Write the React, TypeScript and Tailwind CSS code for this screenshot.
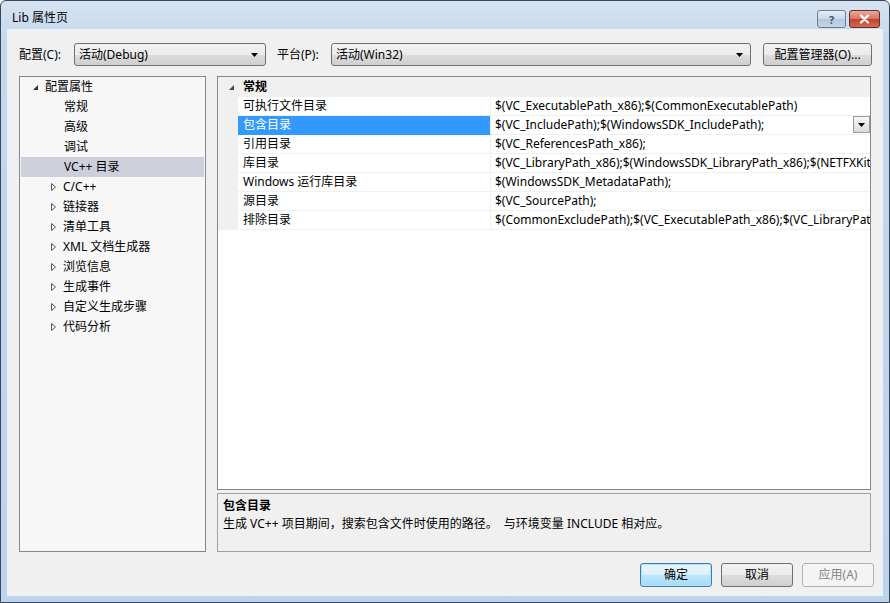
import React from "react";

const font = "font-[family-name:'Noto_Sans','Noto_Sans_CJK_SC',sans-serif]";

const treeChildren = ["常规", "高级", "调试", "VC++ 目录"];
const treeGroups = ["C/C++", "链接器", "清单工具", "XML 文档生成器", "浏览信息", "生成事件", "自定义生成步骤", "代码分析"];

const rows = [
  { name: "可执行文件目录", value: "$(VC_ExecutablePath_x86);$(CommonExecutablePath)" },
  { name: "包含目录", value: "$(VC_IncludePath);$(WindowsSDK_IncludePath);", selected: true },
  { name: "引用目录", value: "$(VC_ReferencesPath_x86);" },
  { name: "库目录", value: "$(VC_LibraryPath_x86);$(WindowsSDK_LibraryPath_x86);$(NETFXKitsDir)Lib\\um\\x86" },
  { name: "Windows 运行库目录", value: "$(WindowsSDK_MetadataPath);" },
  { name: "源目录", value: "$(VC_SourcePath);" },
  { name: "排除目录", value: "$(CommonExcludePath);$(VC_ExecutablePath_x86);$(VC_LibraryPath_x86);" },
];

function ExpandedArrow() {
  return (
    <svg width="7" height="7" viewBox="0 0 7 7" className="shrink-0">
      <path d="M6 1 L6 6 L1 6 Z" fill="#333" />
    </svg>
  );
}

function CollapsedArrow() {
  return (
    <svg width="7" height="10" viewBox="0 0 7 10" className="shrink-0">
      <path d="M1.5 1.5 L5.5 5 L1.5 8.5 Z" fill="none" stroke="#555" strokeWidth="1" />
    </svg>
  );
}

function DropArrow() {
  return (
    <svg width="7" height="4" viewBox="0 0 7 4">
      <path d="M0 0 H7 L3.5 4 Z" fill="#000" />
    </svg>
  );
}

function Combo({ value, width }: { value: string; width: string }) {
  return (
    <div
      className={`${width} shrink-0 h-[23px] flex items-center justify-between rounded-[3px] border border-[#707070] bg-[linear-gradient(#f2f2f2,#ebebeb_50%,#dddddd_50%,#cfcfcf)] pl-[4px] pr-[7px]`}
    >
      <span>{value}</span>
      <DropArrow />
    </div>
  );
}

function Button({ label, primary, disabled }: { label: string; primary?: boolean; disabled?: boolean }) {
  return (
    <div
      className={`w-[72px] h-[24px] flex items-center justify-center rounded-[3px] border ${
        primary
          ? "border-[#3c7fb1] bg-[linear-gradient(#eaf6fd,#d9f0fc_50%,#bee6fd_50%,#a7d9f5)] shadow-[inset_0_0_0_1px_#aee0f7]"
          : disabled
          ? "border-[#adb2b5] bg-[#f4f4f4] text-[#838383]"
          : "border-[#707070] bg-[linear-gradient(#f2f2f2,#ebebeb_50%,#dddddd_50%,#cfcfcf)]"
      }`}
    >
      {label}
    </div>
  );
}

export default function App() {
  return (
    <div className={`w-[890px] h-[603px] ${font} text-[12px] leading-none text-black`}>
      <div className="w-full h-full flex flex-col rounded-t-[6px] border border-[#38475a] bg-[linear-gradient(#d6e3f2,#c4d8ee_40px,#bcd3ec)]">
        {/* title bar */}
        <div className="h-[29px] shrink-0 flex items-start justify-between pl-[11px] pr-[9px]">
          <span className="mt-[11px] text-[12px]">Lib 属性页</span>
          <div className="flex gap-[3px] mt-[9px]">
            <div className="w-[29px] h-[18px] rounded-[3px] border border-[#6d7d91] bg-[linear-gradient(#e6eef8,#c9d7e8_50%,#b4c6dc_50%,#c4d5e9)] flex items-center justify-center text-[11px] font-bold text-[#44546a]">
              ?
            </div>
            <div className="w-[31px] h-[18px] rounded-[3px] border border-[#6b2a22] bg-[linear-gradient(#e9a99c,#d47260_50%,#c2412a_50%,#d26a50)] flex items-center justify-center">
              <svg width="11" height="10" viewBox="0 0 11 10">
                <path d="M2 1.5 L9 8.5 M9 1.5 L2 8.5" stroke="#fff" strokeWidth="2.4" strokeLinecap="round" />
              </svg>
            </div>
          </div>
        </div>

        {/* client area */}
        <div className="flex-1 mx-[7px] mb-[7px] bg-[#f0f0f0] flex flex-col shadow-[0_0_0_1px_#eaf1f9]">
          {/* top row */}
          <div className="flex items-center h-[23px] mt-[13px] pl-[11px] pr-[11px]">
            <span className="w-[55px] shrink-0">配置(C):</span>
            <Combo value="活动(Debug)" width="w-[192px]" />
            <span className="ml-[11px] w-[54px] shrink-0">平台(P):</span>
            <Combo value="活动(Win32)" width="w-[420px]" />
            <div className="ml-[12px] w-[109px] shrink-0 h-[23px] flex items-center justify-center rounded-[3px] border border-[#707070] bg-[linear-gradient(#f2f2f2,#ebebeb_50%,#dddddd_50%,#cfcfcf)]">
              配置管理器(O)...
            </div>
          </div>

          {/* main area */}
          <div className="flex mt-[10px] pl-[11px] pr-[11px] h-[476px] gap-[11px]">
            {/* tree */}
            <div className="w-[187px] shrink-0 border border-[#828790] bg-[#f7f7f7] px-[1px]">
              <div className="h-[20px] flex items-center">
                <div className="w-[24px] flex justify-end pr-[6px]">
                  <ExpandedArrow />
                </div>
                <span>配置属性</span>
              </div>
              {treeChildren.map((c) => (
                <div
                  key={c}
                  className={`h-[20px] flex items-center pl-[43px] whitespace-nowrap ${c === "VC++ 目录" ? "bg-[#cdd0da]" : ""}`}
                >
                  {c}
                </div>
              ))}
              {treeGroups.map((g) => (
                <div key={g} className="h-[20px] flex items-center pl-[29px] gap-[6px] whitespace-nowrap">
                  <CollapsedArrow />
                  <span>{g}</span>
                </div>
              ))}
            </div>

            {/* right side */}
            <div className="flex-1 min-w-0 flex flex-col gap-[3px]">
              <div className="h-[415px] border border-[#828790] bg-white overflow-hidden">
                <div className="h-[20px] flex items-center bg-[#f0f0f0]">
                  <div className="w-[25px] flex justify-center pl-[1px]">
                    <svg width="5" height="5" viewBox="0 0 5 5">
                      <path d="M5 0 L5 5 L0 5 Z" fill="#444" />
                    </svg>
                  </div>
                  <span className="font-bold">常规</span>
                </div>
                {rows.map((r) => (
                  <div key={r.name} className="h-[19px] flex">
                    <div className="w-[20px] shrink-0 bg-[#f0f0f0]" />
                    <div
                      className={`w-[253px] shrink-0 flex items-center pl-[5px] border-r border-[#f0f0f0] border-b ${
                        r.selected ? "bg-[#3399ff] text-white border-b-[#3399ff]" : "border-b-[#f0f0f0]"
                      }`}
                    >
                      {r.name}
                    </div>
                    <div className="flex-1 min-w-0 flex items-center pl-[4px] border-b border-[#f0f0f0] relative overflow-hidden">
                      <span className="whitespace-nowrap">{r.value}</span>
                      {r.selected && (
                        <div className="absolute right-[0px] top-[0px] w-[17px] h-[17px] border border-[#9a9a9a] bg-[linear-gradient(#f6f6f6,#dcdcdc)] flex items-center justify-center">
                          <DropArrow />
                        </div>
                      )}
                    </div>
                  </div>
                ))}
              </div>
              <div className="h-[59px] border border-[#a0a0a0] bg-[#f0f0f0] pl-[5px] pt-[5px]">
                <div className="font-bold leading-[14px]">包含目录</div>
                <div className="mt-[4px] leading-[14px] whitespace-nowrap">
                  生成 VC++ 项目期间，搜索包含文件时使用的路径。&nbsp;&nbsp;与环境变量 INCLUDE 相对应。
                </div>
              </div>
            </div>
          </div>

          {/* buttons */}
          <div className="flex justify-end gap-[9px] mt-[11px] pr-[8px]">
            <Button label="确定" primary />
            <Button label="取消" />
            <Button label="应用(A)" disabled />
          </div>
        </div>
      </div>
    </div>
  );
}
